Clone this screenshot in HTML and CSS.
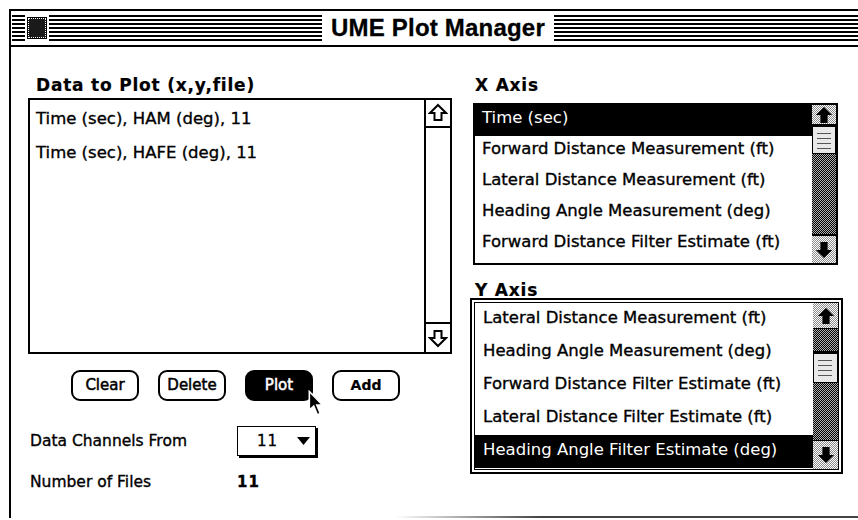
FILE: index.html
```html
<!DOCTYPE html>
<html>
<head>
<meta charset="utf-8">
<title>UME Plot Manager</title>
<link rel="stylesheet" href="styles.css">
</head>
<body>
<div class="window">
  <div class="titlebar">
    <div class="tb-left"><div class="closebox"><span class="closebox-inner"></span></div></div>
    <div class="title">UME Plot Manager</div>
    <div class="tb-right"></div>
  </div>
  <div class="content">
    <div class="col-left">
      <div class="label">Data to Plot (x,y,file)</div>
      <div class="plotlist">
        <div class="plot-items">
          <div class="plot-item">Time (sec), HAM (deg), 11</div>
          <div class="plot-item">Time (sec), HAFE (deg), 11</div>
        </div>
        <div class="vscroll">
          <div class="vs-btn vs-up">
            <svg width="20" height="20" viewBox="0 0 20 20"><polygon points="10,2 18,10 13.5,10 13.5,17 6.5,17 6.5,10 2,10" fill="#fff" stroke="#000" stroke-width="2"/></svg>
          </div>
          <div class="vs-track"></div>
          <div class="vs-btn vs-down">
            <svg width="20" height="20" viewBox="0 0 20 20"><polygon points="10,18 18,10 13.5,10 13.5,3 6.5,3 6.5,10 2,10" fill="#fff" stroke="#000" stroke-width="2"/></svg>
          </div>
        </div>
      </div>
      <div class="buttons">
        <div class="btn">Clear</div>
        <div class="btn">Delete</div>
        <div class="btn btn-default">Plot
          <svg class="cursor" width="16" height="27" viewBox="0 0 12 20"><path d="M1,1 L1,15 L4.3,12 L7,18.5 L9.2,17.5 L6.6,11.2 L11,11.2 Z" fill="#000" stroke="#fff" stroke-width="1.2" stroke-linejoin="miter"/></svg>
        </div>
        <div class="btn btn-bold">Add</div>
      </div>
      <div class="field-row">
        <span class="field-label">Data Channels From</span>
        <div class="popup"><span class="popup-value">11</span><svg width="13" height="8" viewBox="0 0 13 8"><polygon points="0,0 13,0 6.5,8" fill="#000"/></svg></div>
      </div>
      <div class="field-row files-row">
        <span class="field-label">Number of Files</span>
        <span class="field-value">11</span>
      </div>
    </div>
    <div class="col-right">
      <div class="label label-x">X Axis</div>
      <div class="axislist xlist">
        <div class="axis-items">
          <div class="axis-item selected">Time (sec)</div>
          <div class="axis-item">Forward Distance Measurement (ft)</div>
          <div class="axis-item">Lateral Distance Measurement (ft)</div>
          <div class="axis-item">Heading Angle Measurement (deg)</div>
          <div class="axis-item">Forward Distance Filter Estimate (ft)</div>
        </div>
        <div class="dscroll xscroll">
          <div class="ds-btn ds-up"><svg width="18" height="18" viewBox="0 0 20 20"><polygon points="10,1 19,10 14,10 14,19 6,19 6,10 1,10" fill="#000"/></svg></div>
          <div class="ds-thumb"></div>
          <div class="ds-track ds-grow"></div>
          <div class="ds-btn ds-down"><svg width="18" height="18" viewBox="0 0 20 20"><polygon points="10,19 19,10 14,10 14,1 6,1 6,10 1,10" fill="#000"/></svg></div>
        </div>
      </div>
      <div class="label label-y">Y Axis</div>
      <div class="ylist-frame">
        <div class="axislist ylist">
          <div class="axis-items">
            <div class="axis-item">Lateral Distance Measurement (ft)</div>
            <div class="axis-item">Heading Angle Measurement (deg)</div>
            <div class="axis-item">Forward Distance Filter Estimate (ft)</div>
            <div class="axis-item">Lateral Distance Filter Estimate (ft)</div>
            <div class="axis-item selected">Heading Angle Filter Estimate (deg)</div>
          </div>
          <div class="dscroll yscroll">
            <div class="ds-btn ds-up"><svg width="18" height="18" viewBox="0 0 20 20"><polygon points="10,1 19,10 14,10 14,19 6,19 6,10 1,10" fill="#000"/></svg></div>
            <div class="ds-track ds-short"></div>
            <div class="ds-thumb"></div>
            <div class="ds-track ds-grow"></div>
            <div class="ds-btn ds-down"><svg width="18" height="18" viewBox="0 0 20 20"><polygon points="10,19 19,10 14,10 14,1 6,1 6,10 1,10" fill="#000"/></svg></div>
          </div>
        </div>
      </div>
    </div>
  </div>
</div>
</body>
</html>
```
FILE: styles.css
```css
html, body {
  margin: 0;
  padding: 0;
  width: 858px;
  height: 520px;
  overflow: hidden;
  background: #fff;
}

body {
  font-family: "DejaVu Sans", "Noto Sans", sans-serif;
  color: #000;
  -webkit-text-stroke: 0.35px currentColor;
}

.window {
  margin: 9px 0 0 9px;
  width: 856px;
  height: 509px;
  box-sizing: border-box;
  border-left: 2px solid #000;
  border-top: 2px solid #000;
  background: linear-gradient(to right, rgba(0,0,0,0) 45%, #444 62%) left bottom / 100% 2px no-repeat;
}

/* ---------- Title bar ---------- */
.titlebar {
  height: 34px;
  border-bottom: 2px solid #000;
  display: grid;
  grid-template-columns: 1fr auto 1fr;
  align-items: center;
  background:
    repeating-linear-gradient(to bottom, #000 0 2px, #fff 2px 4px) 1px 4px / calc(100% - 1px) 26px no-repeat,
    #fff;
}

.tb-left {
  display: flex;
  align-items: center;
}

.closebox {
  margin-left: 14px;
  padding: 3px;
  background: #fff;
  display: flex;
}

.closebox-inner {
  display: block;
  width: 18px;
  height: 20px;
  box-sizing: border-box;
  background: #1a1a1a;
  border: 1px dotted #fff;
  outline: 1px solid #000;
}

.title {
  background: #fff;
  height: 28px;
  line-height: 28px;
  padding: 0 9px;
  font-family: "Liberation Sans", Arial, sans-serif;
  font-weight: bold;
  font-size: 24px;
  letter-spacing: 0.2px;
  -webkit-text-stroke: 0.3px #000;
}

/* ---------- Content ---------- */
.content {
  display: flex;
  padding-left: 17px;
}

.label {
  font-weight: bold;
  font-size: 17px;
  letter-spacing: 0.8px;
  line-height: 20px;
  margin-top: 28px;
  -webkit-text-stroke: 0.2px #000;
}

.col-left .label {
  margin-left: 8px;
  margin-bottom: 3px;
}

.col-left {
  width: 424px;
}

.plotlist {
  width: 424px;
  height: 256px;
  box-sizing: border-box;
  border: 2px solid #000;
  display: flex;
}

.plot-items {
  flex: 1;
  padding: 2px 0 0 6px;
}

.plot-item {
  font-size: 16.5px;
  line-height: 34px;
}

.vscroll {
  width: 24px;
  border-left: 2px solid #000;
  display: flex;
  flex-direction: column;
}

.vs-btn {
  height: 26px;
  display: flex;
  align-items: center;
  justify-content: center;
}

.vs-up { border-bottom: 2px solid #000; }
.vs-down { border-top: 2px solid #000; height: 28px; }

.vs-track {
  flex: 1;
  background: #fff;
}

/* ---------- Buttons ---------- */
.buttons {
  display: flex;
  gap: 19px;
  margin-top: 16px;
  padding-left: 43px;
}

.btn {
  position: relative;
  width: 68px;
  height: 31px;
  box-sizing: border-box;
  border: 2px solid #000;
  border-radius: 9px;
  font-size: 15px;
  line-height: 27px;
  text-align: center;
  -webkit-text-stroke: 0.5px currentColor;
}

.btn-default {
  background: #000;
  color: #fff;
}

.btn-bold {
  font-weight: bold;
  font-size: 14px;
  -webkit-text-stroke: 0.2px currentColor;
}

.cursor {
  position: absolute;
  left: 61px;
  top: 18px;
}

/* ---------- Fields ---------- */
.field-row {
  display: flex;
  align-items: center;
  margin-top: 25px;
  height: 30px;
}

.field-label {
  width: 207px;
  padding-left: 2px;
  font-size: 15.5px;
}

.popup {
  width: 79px;
  height: 30px;
  box-sizing: border-box;
  border: 1.5px solid #000;
  box-shadow: 2px 2px 0 #000;
  display: flex;
  align-items: center;
  justify-content: flex-end;
  gap: 19px;
  padding-right: 5px;
}

.popup-value {
  font-size: 15px;
  letter-spacing: 1px;
}

.files-row {
  margin-top: 11px;
}

.field-value {
  font-weight: bold;
  font-size: 15px;
  letter-spacing: 1px;
}

/* ---------- Right column ---------- */
.col-right {
  margin-left: 18px;
  width: 373px;
}

.label-x {
  margin-left: 5px;
  margin-bottom: 8px;
}

.label-y {
  margin-top: 16px;
  margin-left: 5px;
  line-height: 18px;
  margin-bottom: -1px;
}

.axislist {
  display: flex;
  box-sizing: border-box;
}

.xlist {
  margin-left: 3px;
  width: 365px;
  height: 162px;
  border: 2px solid #000;
}

.axis-items {
  flex: 1;
}

.axis-item {
  font-size: 16.5px;
  height: 31px;
  line-height: 25px;
  padding-left: 7px;
  white-space: nowrap;
}

.axis-item.selected {
  background: #000;
  color: #fff;
  -webkit-text-stroke: 0;
}

.ylist-frame {
  width: 373px;
  height: 176px;
  box-sizing: border-box;
  border: 2px solid #000;
  padding: 2px;
  background: #fff;
}

.ylist {
  height: 100%;
  border: 1px solid #000;
}

.ylist .axis-item {
  height: 33px;
  line-height: 30px;
  padding-left: 8px;
}

/* dithered scroll bars */
.dscroll {
  width: 24px;
  display: flex;
  flex-direction: column;
  background: #000;
}

.yscroll {
  width: 25px;
}

.ds-btn {
  display: flex;
  align-items: center;
  justify-content: center;
  background: repeating-conic-gradient(#8a8a8a 0 25%, #fff 0 50%) 0 0 / 2px 2px;
}

.xscroll .ds-up { height: 19px; }
.xscroll .ds-down { height: 27px; margin-top: 2px; }
.yscroll .ds-up { height: 25px; }
.yscroll .ds-down { height: 28px; margin-top: 1px; }

.ds-thumb {
  height: 26px;
  margin: 3px 1px 1px;
  background:
    repeating-linear-gradient(to bottom, rgba(0,0,0,0) 0 4px, #555 4px 5px) 4px 2px / 14px calc(100% - 4px) no-repeat,
    #e8e8e8;
}

.yscroll .ds-thumb {
  height: 28px;
}

.ds-track {
  background: repeating-conic-gradient(#000 0 25%, #b0b0b0 0 50%) 0 0 / 2px 2px;
}

.ds-grow { flex: 1; }
.ds-short { height: 22px; margin-top: 1px; }
```
